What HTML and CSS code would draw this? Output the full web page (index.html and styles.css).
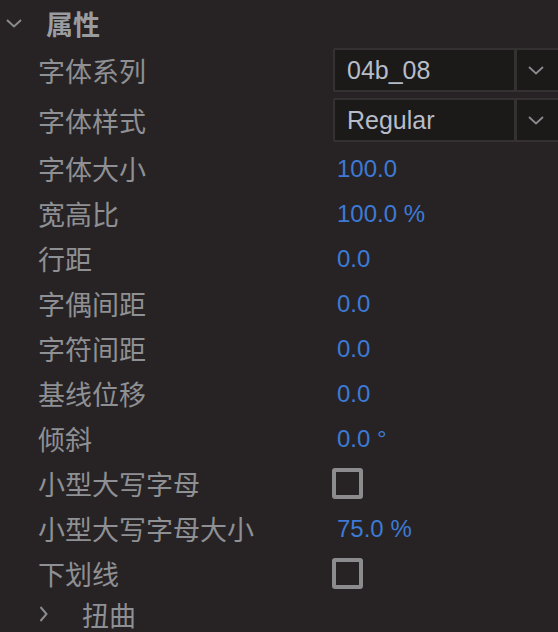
FILE: index.html
```html
<!DOCTYPE html>
<html lang="zh-CN">
<head>
    <meta charset="UTF-8">
    <meta name="viewport" content="width=device-width, initial-scale=1.0">
    <title>属性</title>
    <link rel="stylesheet" href="styles.css">
</head>
<body>
    <div class="panel">
        <div class="section-header">
            <svg class="twirl" width="16" height="9" viewBox="0 0 16 9"><path d="M1 1 L8 7.5 L15 1" fill="none" stroke="#8a8b8f" stroke-width="2"/></svg>
            <span class="section-title">属性</span>
        </div>

        <div class="row row-select first">
            <span class="label">字体系列</span>
            <div class="select">
                <span class="select-value">04b_08</span>
                <span class="select-arrow">
                    <svg width="16" height="9" viewBox="0 0 16 9"><path d="M1 1 L8 7.5 L15 1" fill="none" stroke="#8a8b8f" stroke-width="1.8"/></svg>
                </span>
            </div>
        </div>
        <div class="row row-select">
            <span class="label">字体样式</span>
            <div class="select">
                <span class="select-value">Regular</span>
                <span class="select-arrow">
                    <svg width="16" height="9" viewBox="0 0 16 9"><path d="M1 1 L8 7.5 L15 1" fill="none" stroke="#8a8b8f" stroke-width="1.8"/></svg>
                </span>
            </div>
        </div>

        <div class="row"><span class="label">字体大小</span><span class="value">100.0</span></div>
        <div class="row"><span class="label">宽高比</span><span class="value">100.0 %</span></div>
        <div class="row"><span class="label">行距</span><span class="value">0.0</span></div>
        <div class="row"><span class="label">字偶间距</span><span class="value">0.0</span></div>
        <div class="row"><span class="label">字符间距</span><span class="value">0.0</span></div>
        <div class="row"><span class="label">基线位移</span><span class="value">0.0</span></div>
        <div class="row"><span class="label">倾斜</span><span class="value">0.0 °</span></div>
        <div class="row"><span class="label">小型大写字母</span><span class="checkbox"></span></div>
        <div class="row"><span class="label">小型大写字母大小</span><span class="value">75.0 %</span></div>
        <div class="row"><span class="label">下划线</span><span class="checkbox"></span></div>

        <div class="subsection">
            <svg class="twirl-right" width="9" height="16" viewBox="0 0 9 16"><path d="M1.5 1 L7.5 8 L1.5 15" fill="none" stroke="#8a8b8f" stroke-width="2"/></svg>
            <span class="label">扭曲</span>
        </div>
    </div>
</body>
</html>
```

FILE: styles.css
```css
* {
    margin: 0;
    padding: 0;
    box-sizing: border-box;
}

body {
    background-color: #272324;
    font-family: "Noto Sans CJK SC", "Liberation Sans", sans-serif;
    color: #8e9094;
    overflow: hidden;
}

.panel {
    width: 558px;
    height: 632px;
}

.section-header {
    display: flex;
    align-items: center;
    height: 46px;
    padding-left: 6px;
}

.twirl {
    margin-right: 24px;
}

.section-title {
    font-size: 27px;
    line-height: 1;
    font-weight: 700;
    color: #9a9ca0;
}

.row {
    display: grid;
    grid-template-columns: 299px 1fr;
    align-items: center;
    height: 45px;
    padding-left: 38px;
}

.row-select {
    height: 52px;
}

.row-select.first {
    height: 48px;
}

.label {
    font-size: 27px;
    line-height: 1;
    white-space: nowrap;
}

.value {
    font-family: "Liberation Sans", sans-serif;
    font-size: 24px;
    line-height: 1;
    color: #3d7ad6;
}

.select {
    display: flex;
    height: 44px;
    margin-left: -4px;
    margin-right: -4px;
    background-color: #1c1919;
    border: 2px solid #353132;
    border-radius: 2px;
}

.select-value {
    flex: 0 0 182px;
    display: flex;
    align-items: center;
    padding-left: 12px;
    font-family: "Liberation Sans", sans-serif;
    font-size: 25px;
    color: #b6bdc9;
    border-right: 3px solid #353132;
}

.select-arrow {
    flex: 1;
    display: flex;
    align-items: center;
    padding-left: 11px;
}

.checkbox {
    width: 31px;
    height: 31px;
    margin-left: -5px;
    border: 4px solid #8c8c8f;
    border-radius: 3px;
}

.subsection {
    display: flex;
    align-items: center;
    height: 36px;
    padding-left: 39px;
}

.twirl-right {
    margin-right: 34px;
}
```
